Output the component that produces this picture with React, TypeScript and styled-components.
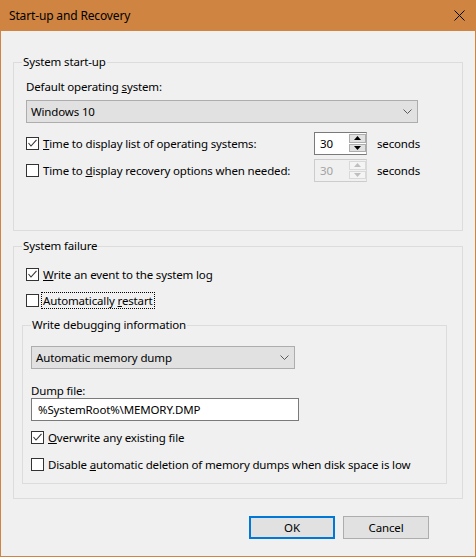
import React from 'react';
import styled, { createGlobalStyle } from 'styled-components';

const GlobalStyle = createGlobalStyle`
  html, body {
    margin: 0;
    padding: 0;
    background: #f0f0f0;
  }
  body {
    font-family: "Noto Sans", "Segoe UI", sans-serif;
    font-size: 11.5px;
    letter-spacing: -0.15px;
    color: #000000;
  }
`;

const Window = styled.div`
  width: 476px;
  height: 557px;
  box-sizing: border-box;
  border: 1px solid #cf8441;
  border-top: none;
  display: flex;
  flex-direction: column;
  background: #f0f0f0;
`;

const TitleBar = styled.div`
  height: 31px;
  flex: none;
  background: #cf8441;
  display: flex;
  align-items: center;
  justify-content: space-between;
  padding: 0 10px 0 8px;
  font-size: 12px;
  color: #000;
`;

const Body = styled.div`
  flex: 1;
  display: flex;
  flex-direction: column;
  padding: 31px 12px 15px 12px;
`;

const Group = styled.div<{ $top?: number; $pad: string; $height?: number }>`
  border: 1px solid #dcdcdc;
  margin-top: ${p => p.$top ?? 0}px;
  padding: ${p => p.$pad};
  height: ${p => (p.$height ? `${p.$height}px` : 'auto')};
  box-sizing: border-box;
  display: flex;
  flex-direction: column;
`;

const Legend = styled.div<{ $indent: number }>`
  margin: -9px 0 0 ${p => p.$indent}px;
  padding: 0 1px;
  width: fit-content;
  line-height: 16px;
  background: #f0f0f0;
`;

const Label = styled.div<{ $top: number }>`
  margin-top: ${p => p.$top}px;
  line-height: 15px;
  white-space: nowrap;
`;

const Key = styled.span`
  text-decoration: underline;
  text-underline-offset: 1px;
`;

const Combo = styled.div<{ $width: number; $top: number }>`
  width: ${p => p.$width}px;
  height: 23px;
  margin-top: ${p => p.$top}px;
  box-sizing: border-box;
  border: 1px solid #adadad;
  background: #e1e1e1;
  display: flex;
  align-items: center;
  justify-content: space-between;
  padding: 0 5px 0 4px;
`;

const TextBox = styled.div<{ $width: number }>`
  width: ${p => p.$width}px;
  height: 23px;
  box-sizing: border-box;
  border: 1px solid #7a7a7a;
  background: #ffffff;
  display: flex;
  align-items: center;
  padding-left: 6px;
`;

const SpinRow = styled.div<{ $top: number }>`
  display: grid;
  grid-template-columns: 278px 53px auto;
  column-gap: 10px;
  align-items: center;
  margin-top: ${p => p.$top}px;
  height: 23px;
`;

const CheckRow = styled.label<{ $top: number; $indent?: number }>`
  display: flex;
  align-items: center;
  gap: 3px;
  height: 16px;
  margin-top: ${p => p.$top}px;
  margin-left: ${p => p.$indent ?? 0}px;
  white-space: nowrap;
`;

const Box = styled.span`
  width: 13px;
  height: 13px;
  flex: none;
  box-sizing: border-box;
  border: 1px solid #333333;
  background: #ffffff;
  display: inline-flex;
  svg {
    display: block;
  }
`;

const Caption = styled.span<{ $focused?: boolean }>`
  line-height: 15px;
  padding: 0 1px;
  outline: ${p => (p.$focused ? '1px dotted #000' : 'none')};
  outline-offset: 0;
`;

const Spin = styled.div<{ $disabled?: boolean }>`
  display: flex;
  width: 53px;
  height: 23px;
  box-sizing: border-box;
  border: 1px solid ${p => (p.$disabled ? '#cccccc' : '#7a7a7a')};
  border-right-color: ${p => (p.$disabled ? '#d9d9d9' : '#adadad')};
  background: ${p => (p.$disabled ? '#f0f0f0' : '#ffffff')};
`;

const SpinValue = styled.div<{ $disabled?: boolean }>`
  flex: 1;
  padding-left: 5px;
  line-height: 21px;
  color: ${p => (p.$disabled ? '#a3a3a3' : '#000')};
`;

const SpinButtons = styled.div`
  width: 17px;
  display: flex;
  flex-direction: column;
  gap: 1px;
  padding: 1px 0 2px 0;
  box-sizing: border-box;
`;

const SpinButton = styled.div<{ $disabled?: boolean }>`
  flex: 1;
  box-sizing: border-box;
  border: 1px solid ${p => (p.$disabled ? '#d9d9d9' : '#adadad')};
  background: ${p => (p.$disabled ? '#f4f4f4' : '#e1e1e1')};
  display: flex;
  align-items: center;
  justify-content: center;
  color: ${p => (p.$disabled ? '#bfbfbf' : '#000')};
`;

const Footer = styled.div`
  display: flex;
  justify-content: flex-end;
  gap: 8px;
  margin-top: 17px;
  padding-right: 34px;
`;

const Button = styled.button<{ $default?: boolean }>`
  width: 86px;
  height: 23px;
  box-sizing: border-box;
  font: inherit;
  letter-spacing: inherit;
  color: #000;
  background: #e1e1e1;
  border: ${p => (p.$default ? '2px solid #0078d7' : '1px solid #adadad')};
  padding: 0;
`;

const Chevron = () => (
  <svg width="9" height="6" viewBox="0 0 9 6">
    <polyline points="0.5,0.5 4.5,4.5 8.5,0.5" fill="none" stroke="#5a5a5a" strokeWidth="1" />
  </svg>
);

const Check: React.FC<{ checked?: boolean }> = ({ checked }) => (
  <Box>
    {checked && (
      <svg width="11" height="11" viewBox="0 0 11 11">
        <polyline points="1.5,5 4,8 9.5,1.8" fill="none" stroke="#333" strokeWidth="1.1" />
      </svg>
    )}
  </Box>
);

const Arrow: React.FC<{ up?: boolean }> = ({ up }) => (
  <svg width="7" height="4" viewBox="0 0 7 4">
    <polygon points={up ? '0,4 7,4 3.5,0' : '0,0 7,0 3.5,4'} fill="currentColor" />
  </svg>
);

const Spinner: React.FC<{ value: string; disabled?: boolean }> = ({ value, disabled }) => (
  <Spin $disabled={disabled}>
    <SpinValue $disabled={disabled}>{value}</SpinValue>
    <SpinButtons>
      <SpinButton $disabled={disabled}><Arrow up /></SpinButton>
      <SpinButton $disabled={disabled}><Arrow /></SpinButton>
    </SpinButtons>
  </Spin>
);

export default function App() {
  return (
    <>
      <GlobalStyle />
      <Window>
        <TitleBar>
          <span>Start-up and Recovery</span>
          <svg width="11" height="11" viewBox="0 0 11 11">
            <path d="M0.5 0.5 L10.5 10.5 M10.5 0.5 L0.5 10.5" stroke="#000" strokeWidth="1" />
          </svg>
        </TitleBar>
        <Body>
          <Group $pad="0 12px 0 12px" $height={169}>
            <Legend $indent={-4}>System start-up</Legend>
            <Label $top={9}>Default operating <Key>s</Key>ystem:</Label>
            <Combo $width={392} $top={6}>
              <span>Windows 10</span>
              <Chevron />
            </Combo>
            <SpinRow $top={9}>
              <CheckRow $top={0}>
                <Check checked />
                <Caption><Key>T</Key>ime to display list of operating systems:</Caption>
              </CheckRow>
              <Spinner value="30" />
              <span>seconds</span>
            </SpinRow>
            <SpinRow $top={4}>
              <CheckRow $top={0}>
                <Check />
                <Caption>Time to <Key>d</Key>isplay recovery options when needed:</Caption>
              </CheckRow>
              <Spinner value="30" disabled />
              <span>seconds</span>
            </SpinRow>
          </Group>

          <Group $top={15} $pad="0 15px 14px 8px">
            <Legend $indent={0}>System failure</Legend>
            <CheckRow $top={12} $indent={4}>
              <Check checked />
              <Caption><Key>W</Key>rite an event to the system log</Caption>
            </CheckRow>
            <CheckRow $top={10} $indent={4}>
              <Check />
              <Caption $focused>Automatically <Key>r</Key>estart</Caption>
            </CheckRow>

            <Group $top={17} $pad="0 8px 11px 8px">
              <Legend $indent={0}>Write debugging information</Legend>
              <Combo $width={264} $top={13}>
                <span>Automatic memory dump</span>
                <Chevron />
              </Combo>
              <Label $top={14}>Dump file:</Label>
              <TextBox $width={268}>%SystemRoot%\MEMORY.DMP</TextBox>
              <CheckRow $top={8}>
                <Check checked />
                <Caption><Key>O</Key>verwrite any existing file</Caption>
              </CheckRow>
              <CheckRow $top={11}>
                <Check />
                <Caption>Disable <Key>a</Key>utomatic deletion of memory dumps when disk space is low</Caption>
              </CheckRow>
            </Group>
          </Group>

          <Footer>
            <Button $default>OK</Button>
            <Button>Cancel</Button>
          </Footer>
        </Body>
      </Window>
    </>
  );
}
